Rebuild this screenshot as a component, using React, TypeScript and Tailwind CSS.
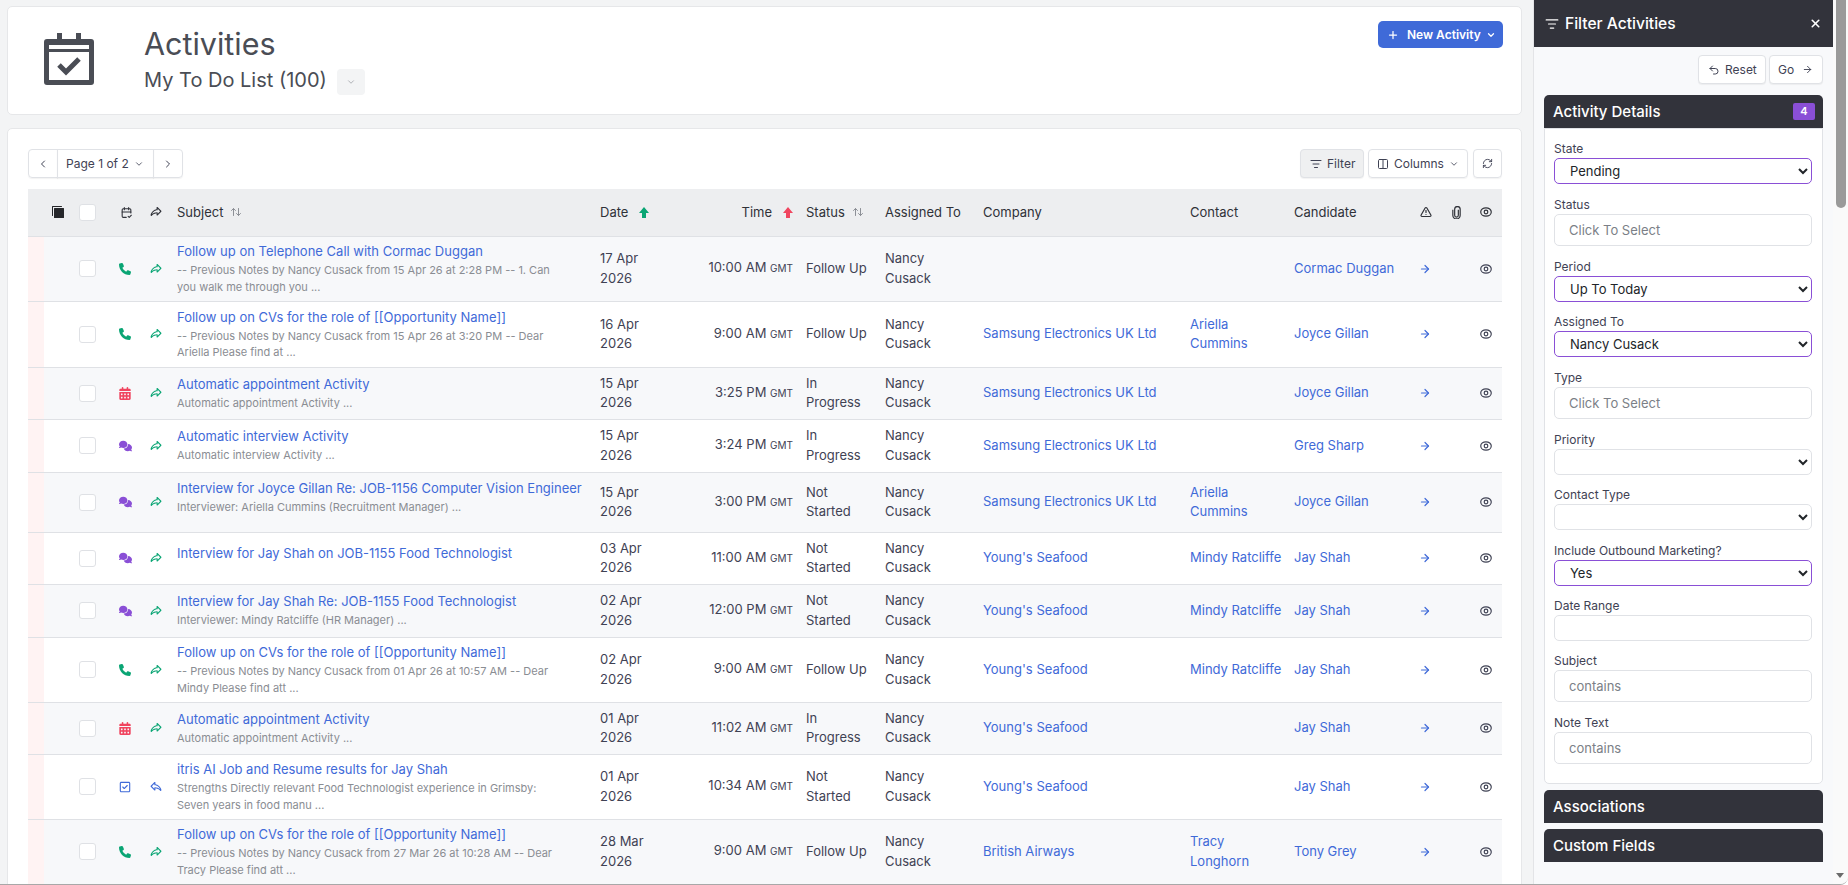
import React from 'react';
import { ArrowRight, ChevronDown, ChevronLeft, ChevronRight, Columns2, ListFilter, Plus, RefreshCw, TriangleAlert, Undo2, X } from 'lucide-react';
import { FaCalendarDays, FaComments, FaPhone, FaRegSquareCheck } from 'react-icons/fa6';
import { PiShareFatBold, PiCopySimpleFill } from 'react-icons/pi';
import { TbArrowsSort, TbCalendarCheck } from 'react-icons/tb';

type Row = {
    kind: 'call' | 'cal' | 'chat' | 'task';
    subject: string;
    note?: string;
    date: string;
    time: string;
    status: string;
    company?: string;
    contact?: string;
    candidate: string;
    h: string;
    pb?: string;
    inbound?: boolean;
};

const rows: Row[] = [
    { kind: 'call', subject: 'Follow up on Telephone Call with Cormac Duggan', note: '-- Previous Notes by Nancy Cusack from 15 Apr 26 at 2:28 PM -- 1. Can you walk me through you ...', date: '17 Apr 2026', time: '10:00 AM', status: 'Follow Up', candidate: 'Cormac Duggan', h: 'h-[65px]' },
    { kind: 'call', subject: 'Follow up on CVs for the role of [[Opportunity Name]]', note: '-- Previous Notes by Nancy Cusack from 15 Apr 26 at 3:20 PM -- Dear Ariella Please find at ...', date: '16 Apr 2026', time: '9:00 AM', status: 'Follow Up', company: 'Samsung Electronics UK Ltd', contact: 'Ariella Cummins', candidate: 'Joyce Gillan', h: 'h-[66px]' },
    { kind: 'cal', subject: 'Automatic appointment Activity', note: 'Automatic appointment Activity ...', date: '15 Apr 2026', time: '3:25 PM', status: 'In Progress', company: 'Samsung Electronics UK Ltd', candidate: 'Joyce Gillan', h: 'h-[52px]' },
    { kind: 'chat', subject: 'Automatic interview Activity', note: 'Automatic interview Activity ...', date: '15 Apr 2026', time: '3:24 PM', status: 'In Progress', company: 'Samsung Electronics UK Ltd', candidate: 'Greg Sharp', h: 'h-[53px]' },
    { kind: 'chat', subject: 'Interview for Joyce Gillan Re: JOB-1156 Computer Vision Engineer', note: 'Interviewer: Ariella Cummins (Recruitment Manager) ...', date: '15 Apr 2026', time: '3:00 PM', status: 'Not Started', company: 'Samsung Electronics UK Ltd', contact: 'Ariella Cummins', candidate: 'Joyce Gillan', h: 'h-[60px]', pb: 'pb-[10px]' },
    { kind: 'chat', subject: 'Interview for Jay Shah on JOB-1155 Food Technologist', date: '03 Apr 2026', time: '11:00 AM', status: 'Not Started', company: "Young's Seafood", contact: 'Mindy Ratcliffe', candidate: 'Jay Shah', h: 'h-[52px]', pb: 'pb-[9px]' },
    { kind: 'chat', subject: 'Interview for Jay Shah Re: JOB-1155 Food Technologist', note: 'Interviewer: Mindy Ratcliffe (HR Manager) ...', date: '02 Apr 2026', time: '12:00 PM', status: 'Not Started', company: "Young's Seafood", contact: 'Mindy Ratcliffe', candidate: 'Jay Shah', h: 'h-[53px]' },
    { kind: 'call', subject: 'Follow up on CVs for the role of [[Opportunity Name]]', note: '-- Previous Notes by Nancy Cusack from 01 Apr 26 at 10:57 AM -- Dear Mindy Please find att ...', date: '02 Apr 2026', time: '9:00 AM', status: 'Follow Up', company: "Young's Seafood", contact: 'Mindy Ratcliffe', candidate: 'Jay Shah', h: 'h-[65px]' },
    { kind: 'cal', subject: 'Automatic appointment Activity', note: 'Automatic appointment Activity ...', date: '01 Apr 2026', time: '11:02 AM', status: 'In Progress', company: "Young's Seafood", candidate: 'Jay Shah', h: 'h-[52px]' },
    { kind: 'task', subject: 'itris AI Job and Resume results for Jay Shah', note: 'Strengths Directly relevant Food Technologist experience in Grimsby: Seven years in food manu ...', date: '01 Apr 2026', time: '10:34 AM', status: 'Not Started', company: "Young's Seafood", candidate: 'Jay Shah', h: 'h-[65px]', inbound: true },
    { kind: 'call', subject: 'Follow up on CVs for the role of [[Opportunity Name]]', note: '-- Previous Notes by Nancy Cusack from 27 Mar 26 at 10:28 AM -- Dear Tracy Please find att ...', date: '28 Mar 2026', time: '9:00 AM', status: 'Follow Up', company: 'British Airways', contact: 'Tracy Longhorn', candidate: 'Tony Grey', h: 'h-[65px]' },
];

const TypeIcon = ({ kind }: { kind: Row['kind'] }) => {
    if (kind === 'call') return <FaPhone className="w-[12px] h-[12px] text-[#0aa574]" />;
    if (kind === 'cal') return <FaCalendarDays className="w-[12px] h-[13px] text-[#f0455f]" />;
    if (kind === 'chat') return <FaComments className="w-[13px] h-[12px] text-[#8a4fd6]" />;
    return <FaRegSquareCheck className="w-[12px] h-[12px] text-[#3f6ad8]" />;
};

const EyeIcon = () => (
    <svg viewBox="0 0 13 11" className="block w-[12px] h-[10px] ml-[6px]" fill="none" stroke="currentColor" strokeWidth="1.3">
        <ellipse cx="6.5" cy="5.5" rx="5.8" ry="4.6" />
        <circle cx="6.5" cy="5.5" r="2" />
    </svg>
);

const ClipIcon = () => (
    <svg viewBox="0 0 12 14" className="block w-[11px] h-[13px] ml-[6px]" fill="none" stroke="currentColor" strokeWidth="1.3">
        <path d="M8 4v6a2 2 0 0 1-4 0V3.5a3 3 0 0 1 6 0V10a4 4 0 0 1-8 0V4" />
    </svg>
);

const SolidArrow = ({ className }: { className: string }) => (
    <svg viewBox="0 0 10 11" className={`w-[10px] h-[11px] ml-[11px] ${className}`} fill="currentColor">
        <path d="M5 0l5 6H7v5H3V6H0z" />
    </svg>
);

const Checkbox = () => <span className="block w-[17px] h-[17px] bg-white border border-[#dfe1e5] rounded-[3px]" />;

const SelectField = ({ label, value, active }: { label: string; value?: string; active?: boolean }) => (
    <div className="mb-[11.5px]">
        <label className="block text-[12px] leading-[17px] mb-[1px] text-[#3f4254]">{label}</label>
        <select
            defaultValue={value ?? ''}
            className={`block w-full h-[26px] bg-white rounded-[5px] border pl-[11px] pr-[1px] text-[13px] text-[#212529] font-['Inter',sans-serif] ${active ? 'border-[#8a4fd6]' : 'border-[#e0e2e6]'}`}
        >
            <option value={value ?? ''}>{value ?? ''}</option>
        </select>
    </div>
);

const InputField = ({ label, placeholder, h = 'h-[32px]', mb = 'mb-[12px]' }: { label: string; placeholder?: string; h?: string; mb?: string }) => (
    <div className={mb}>
        <label className="block text-[12px] leading-[17px] mb-[1px] text-[#3f4254]">{label}</label>
        <input
            placeholder={placeholder}
            className={`block w-full bg-white rounded-[5px] border border-[#e0e2e6] px-[14px] text-[13px] placeholder:text-[#7b7f87] ${h}`}
        />
    </div>
);

const ToolButton = ({ children, className = '' }: { children: React.ReactNode; className?: string }) => (
    <button className={`flex items-center h-[29px] border border-[#e0e2e6] rounded-[4px] text-[12px] text-[#3f4254] shadow-[0_1px_1px_rgba(0,0,0,0.05)] ${className}`}>
        {children}
    </button>
);

export default function App() {
    return (
        <div className="flex h-[885px] overflow-hidden bg-[#f3f4f5] border-b border-[#a8a8a8] rounded-br-[8px] text-[13px] leading-[19.5px] text-[#3f4254] font-['Inter',sans-serif]">
            <main className="w-[1533px] shrink-0 pl-[7px] pr-[11px] pt-[6px]">
                {/* Шапка */}
                <section className="flex h-[109px] bg-white border border-[#e6e7e9] rounded-[5px] pr-[18px]">
                    <div className="pl-[36px] pt-[26px] w-[136px] text-[#4a4d55]">
                        <svg viewBox="0 0 50 52" className="w-[50px] h-[52px]" fill="none">
                            <path d="M13 0h5v6h14V0h5v6h10a3 3 0 0 1 3 3v40a3 3 0 0 1-3 3H3a3 3 0 0 1-3-3V9a3 3 0 0 1 3-3h10z" fill="currentColor" />
                            <rect x="5" y="12" width="40" height="4" fill="#fff" />
                            <rect x="5" y="19" width="40" height="28" fill="#fff" />
                            <path d="M15 32l7 7 13-13" stroke="currentColor" strokeWidth="5" />
                        </svg>
                    </div>
                    <div className="pt-[16px]">
                        <h1 className="text-[30.5px] leading-[42px] text-[#4a4d55]">Activities</h1>
                        <div className="flex items-center text-[20px] leading-[30px] text-[#4a4d55]">
                            My To Do List (100)
                            <span className="flex items-center justify-center ml-[10px] mt-[3px] w-[28px] h-[26px] bg-[#f3f4f5] rounded-[4px]">
                                <ChevronDown className="w-[10px] h-[10px] text-[#a2a5ab]" />
                            </span>
                        </div>
                    </div>
                    <button className="flex items-center ml-auto mt-[14px] h-[27px] w-[125px] pl-[9px] bg-[#3f6ad8] text-white rounded-[5px] text-[12px] font-semibold">
                        <Plus className="w-[12px] h-[12px] mr-[8px]" strokeWidth={2.5} />
                        New Activity
                        <ChevronDown className="w-[10px] h-[10px] ml-[5px]" strokeWidth={3} />
                    </button>
                </section>

                {/* Список */}
                <section className="mt-[13px] h-[761px] bg-white border border-[#e6e7e9] rounded-[5px] pl-[20px] pr-[19px] pt-[20px]">
                    <div className="flex items-center h-[29px]">
                        <div className="flex">
                            <ToolButton className="w-[30px] justify-center rounded-r-none"><ChevronLeft className="w-[12px] h-[12px]" /></ToolButton>
                            <ToolButton className="w-[97px] -ml-px pl-[8px] rounded-none">Page 1 of 2<ChevronDown className="w-[10px] h-[10px] ml-[5px]" /></ToolButton>
                            <ToolButton className="w-[30px] -ml-px justify-center rounded-l-none"><ChevronRight className="w-[12px] h-[12px]" /></ToolButton>
                        </div>
                        <ToolButton className="ml-auto w-[64px] pl-[9px] bg-[#eff0f1]"><ListFilter className="w-[12px] h-[12px] mr-[5px]" />Filter</ToolButton>
                        <ToolButton className="ml-[4px] w-[100px] pl-[8px]"><Columns2 className="w-[12px] h-[12px] mr-[5px]" />Columns<ChevronDown className="w-[10px] h-[10px] ml-[5px]" /></ToolButton>
                        <ToolButton className="ml-[5px] w-[29px] justify-center"><RefreshCw className="w-[11px] h-[11px]" /></ToolButton>
                    </div>

                    <table className="mt-[11px] w-[1474px] table-fixed border-collapse">
                        <colgroup>
                            <col className="w-[16px]" />
                            <col className="w-[35px]" />
                            <col className="w-[29px]" />
                            <col className="w-[40px]" />
                            <col className="w-[28px]" />
                            <col className="w-[424px]" />
                            <col className="w-[104px]" />
                            <col className="w-[102px]" />
                            <col className="w-[79px]" />
                            <col className="w-[98px]" />
                            <col className="w-[207px]" />
                            <col className="w-[104px]" />
                            <col className="w-[114px]" />
                            <col className="w-[37px]" />
                            <col className="w-[29px]" />
                            <col className="w-[28px]" />
                        </colgroup>
                        <thead>
                            <tr className="h-[47px] bg-[#edeef0] border-b border-[#dfe1e5] text-left text-[#2f3138]">
                                <th></th>
                                <th><PiCopySimpleFill className="w-[16px] h-[16px] ml-[6px] text-[#26272b] -scale-x-100" /></th>
                                <th><Checkbox /></th>
                                <th><TbCalendarCheck className="w-[13px] h-[13px] ml-[12px]" /></th>
                                <th><PiShareFatBold className="w-[12px] h-[12px] ml-[2px]" /></th>
                                <th className="font-normal pl-[1px]"><span className="inline-flex items-center">Subject<TbArrowsSort className="w-[12px] h-[12px] ml-[7px] text-[#8d9097]" /></span></th>
                                <th className="font-normal"><span className="inline-flex items-center">Date<SolidArrow className="text-[#0aa574]" /></span></th>
                                <th className="font-normal text-right pr-[13px]"><span className="inline-flex items-center">Time<SolidArrow className="text-[#f0455f]" /></span></th>
                                <th className="font-normal"><span className="inline-flex items-center">Status<TbArrowsSort className="w-[12px] h-[12px] ml-[7px] text-[#8d9097]" /></span></th>
                                <th className="font-normal">Assigned To</th>
                                <th className="font-normal">Company</th>
                                <th className="font-normal">Contact</th>
                                <th className="font-normal">Candidate</th>
                                <th><TriangleAlert className="w-[12px] h-[12px] ml-[12px]" strokeWidth={2.4} /></th>
                                <th><ClipIcon /></th>
                                <th><EyeIcon /></th>
                            </tr>
                        </thead>
                        <tbody>
                            {rows.map((r, i) => (
                                <tr key={i} className={`${r.h} border-b border-[#dfe1e5] ${i % 2 === 0 ? 'bg-[#f7f8fa]' : 'bg-white'}`}>
                                    <td className="bg-[#fff3f3]"></td>
                                    <td></td>
                                    <td><Checkbox /></td>
                                    <td><span className="flex pl-[11px]"><TypeIcon kind={r.kind} /></span></td>
                                    <td>
                                        <PiShareFatBold className={`w-[12px] h-[12px] ml-[2px] ${r.inbound ? 'text-[#3f6ad8] -scale-x-100' : 'text-[#0aa574]'}`} />
                                    </td>
                                    <td className={`pl-[1px] pr-[8px] align-middle ${r.pb ?? ''}`}>
                                        <div className="text-[13px] leading-[19px] text-[#3f6ad8] whitespace-nowrap">{r.subject}</div>
                                        {r.note && <div className="max-w-[380px] text-[11px] leading-[16.5px] text-[#8a8d93] mt-[1px]">{r.note}</div>}
                                    </td>
                                    <td className="pr-[40px]">{r.date}</td>
                                    <td className="text-right pr-[13px] whitespace-nowrap">{r.time} <span className="text-[10px]">GMT</span></td>
                                    <td className="pr-[14px]">{r.status}</td>
                                    <td className="pr-[30px]">Nancy Cusack</td>
                                    <td className="text-[#3f6ad8]">{r.company}</td>
                                    <td className="pr-[10px] text-[#3f6ad8]">{r.contact}</td>
                                    <td className="text-[#3f6ad8]">{r.candidate}</td>
                                    <td><ArrowRight className="w-[12px] h-[12px] ml-[11px] text-[#3f6ad8]" strokeWidth={2.4} /></td>
                                    <td></td>
                                    <td><EyeIcon /></td>
                                </tr>
                            ))}
                        </tbody>
                    </table>
                </section>
            </main>

            {/* Фильтр */}
            <aside className="relative w-[315px] shrink-0 bg-[#fafafa]">
                <div className="w-[300px] h-[884px] bg-[#f8f9fb] border-l border-[#e3e4e7]">
                    <div className="flex items-center h-[47px] bg-[#32333b] text-white pl-[11px] pr-[11px]">
                        <ListFilter className="w-[14px] h-[14px] mr-[6px]" />
                        <span className="text-[15.6px] font-medium">Filter Activities</span>
                        <X className="w-[13px] h-[13px] ml-auto" strokeWidth={3} />
                    </div>
                    <div className="flex justify-end gap-[3px] mt-[8px] mr-[10px]">
                        <ToolButton className="w-[68px] pl-[9px] bg-white"><Undo2 className="w-[12px] h-[12px] mr-[5px]" />Reset</ToolButton>
                        <ToolButton className="w-[54px] pl-[8px] bg-white"><span>Go</span><ArrowRight className="w-[11px] h-[11px] ml-[8px]" /></ToolButton>
                    </div>
                    <div className="mx-[10px] mt-[11px]">
                        <div className="flex items-center h-[33px] pl-[9px] pr-[8px] bg-[#32333b] text-white rounded-t-[5px]">
                            <span className="text-[15px] font-medium">Activity Details</span>
                            <span className="ml-auto flex items-center justify-center w-[22px] h-[17px] bg-[#8a4fd6] rounded-[2px] text-[11px] font-semibold">4</span>
                        </div>
                        <div className="h-[656px] bg-white border border-[#e0e2e6] rounded-b-[5px] pl-[9px] pr-[10px] pt-[11px]">
                            <SelectField label="State" value="Pending" active />
                            <InputField label="Status" placeholder="Click To Select" />
                            <SelectField label="Period" value="Up To Today" active />
                            <SelectField label="Assigned To" value="Nancy Cusack" active />
                            <InputField label="Type" placeholder="Click To Select" />
                            <SelectField label="Priority" />
                            <SelectField label="Contact Type" />
                            <SelectField label="Include Outbound Marketing?" value="Yes" active />
                            <InputField label="Date Range" h="h-[26px]" mb="mb-[11px]" />
                            <InputField label="Subject" placeholder="contains" />
                            <InputField label="Note Text" placeholder="contains" />
                        </div>
                        <div className="flex items-center h-[33px] mt-[6px] pl-[9px] bg-[#32333b] text-white rounded-t-[5px] text-[15px] font-medium">Associations</div>
                        <div className="flex items-center h-[33px] mt-[6px] pl-[9px] bg-[#32333b] text-white rounded-t-[5px] text-[15px] font-medium">Custom Fields</div>
                    </div>
                </div>
                {/* Полоса прокрутки */}
                <div className="absolute right-[2px] top-0 w-[10px] h-[208px] bg-[#9a9a9a] rounded-b-[5px]" />
                <div className="absolute right-[4px] bottom-[6px] w-0 h-0 border-x-[4px] border-x-transparent border-t-[5px] border-t-[#6b6b6b]" />
            </aside>
        </div>
    );
}
